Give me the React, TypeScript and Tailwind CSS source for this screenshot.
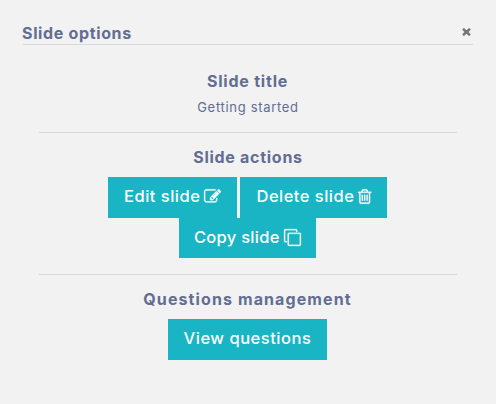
import type { ReactNode } from "react";

const TRASH =
  "M704 736v576q0 14-9 23t-23 9h-64q-14 0-23-9t-9-23v-576q0-14 9-23t23-9h64q14 0 23 9t9 23zm256 0v576q0 14-9 23t-23 9h-64q-14 0-23-9t-9-23v-576q0-14 9-23t23-9h64q14 0 23 9t9 23zm256 0v576q0 14-9 23t-23 9h-64q-14 0-23-9t-9-23v-576q0-14 9-23t23-9h64q14 0 23 9t9 23zm128 724v-948h-896v948q0 22 7 40.5t14.5 27 10.5 8.5h832q3 0 10.5-8.5t14.5-27 7-40.5zm-672-1076h448l-48-117q-7-9-17-11h-317q-10 2-17 11zm928 32v64q0 14-9 23t-23 9h-96v948q0 83-47 143.5t-113 60.5h-832q-66 0-113-58.5t-47-141.5v-952h-96q-14 0-23-9t-9-23v-64q0-14 9-23t23-9h309l70-167q15-37 54-63t79-26h320q40 0 79 26t54 63l70 167h309q14 0 23 9t9 23z";
const EDIT =
  "M888 1184l116-116-152-152-116 116v56h96v96h56zm440-720q-16-16-33 1l-350 350q-17 17-1 33t33-1l350-350q17-17 1-33zm80 594v190q0 119-84.5 203.5t-203.5 84.5h-832q-119 0-203.5-84.5t-84.5-203.5v-832q0-119 84.5-203.5t203.5-84.5h832q63 0 117 25 15 7 18 23 3 17-9 29l-49 49q-14 14-32 8-23-6-45-6h-832q-66 0-113 47t-47 113v832q0 66 47 113t113 47h832q66 0 113-47t47-113v-126q0-13 9-22l64-64q15-15 35-7t20 29zm-96-738l288 288-672 672h-288v-288zm444 132l-92 92-288-288 92-92q28-28 68-28t68 28l152 152q28 28 28 68t-28 68z";
const COPY =
  "M1664 1632v-1088q0-13-9.5-22.5t-22.5-9.5h-1088q-13 0-22.5 9.5t-9.5 22.5v1088q0 13 9.5 22.5t22.5 9.5h1088q13 0 22.5-9.5t9.5-22.5zm128-1088v1088q0 66-47 113t-113 47h-1088q-66 0-113-47t-47-113v-1088q0-66 47-113t113-47h1088q66 0 113 47t47 113zm-384-384v160h-128v-160q0-13-9.5-22.5t-22.5-9.5h-1088q-13 0-22.5 9.5t-9.5 22.5v1088q0 13 9.5 22.5t22.5 9.5h160v128h-160q-66 0-113-47t-47-113v-1088q0-66 47-113t113-47h1088q66 0 113 47t47 113z";

function Icon({ d, viewBox, className }: { d: string; viewBox: string; className: string }) {
  return (
    <svg viewBox={viewBox} className={`shrink-0 overflow-visible fill-white stroke-white ${className}`} strokeWidth="24" aria-hidden="true">
      <path d={d} />
    </svg>
  );
}

function Action({ className, children }: { className: string; children: ReactNode }) {
  return (
    <button
      className={`flex items-center bg-[#1ab5c4] pb-[3px] pl-4 text-[16.5px] font-medium whitespace-nowrap text-white ${className}`}
    >
      {children}
    </button>
  );
}

export default function App() {
  return (
    <div className="h-[404px] w-[496px] bg-[#f2f2f2] pt-[22px] pr-[23px] pl-[23px] font-['Inter','Open_Sans',sans-serif] text-[#626d92]">
      <header className="flex h-[23px] items-start justify-between border-b border-[#d7d8d9]">
        <h1 className="-ml-px text-[16px] leading-[22px] font-bold tracking-[0.65px]">Slide options</h1>
        <button aria-label="Close" className="mt-[6px] mr-[2px]">
          <svg viewBox="0 0 9 8" className="h-2 w-[9px] stroke-[#747474]" strokeWidth="2.5" fill="none">
            <path d="M1 .8 8 7.2M8 .8 1 7.2" />
          </svg>
        </button>
      </header>

      <main className="mx-4 flex flex-col text-center">
        <section className="h-[88px] border-b border-[#d7d8d9] pt-[25px]">
          <h2 className="pr-px text-[16px] leading-[22px] font-bold tracking-[0.79px]">Slide title</h2>
          <p className="mt-[5px] text-[13px] leading-[20px] tracking-[0.69px]">Getting started</p>
        </section>

        <section className="flex h-[142px] flex-col items-center border-b border-[#d7d8d9] pt-[13px]">
          <h2 className="text-[16px] leading-[22px] font-bold tracking-[0.72px]">Slide actions</h2>
          <div className="mt-[9px] mr-px flex gap-[3px]">
            <Action className="h-[41px] w-[129px]">
              <span className="w-20 pt-px text-left tracking-[0.5px]">Edit slide</span>
              <Icon d={EDIT} viewBox="0 0 1792 1792" className="size-[17px]" />
            </Action>
            <Action className="h-[41px] w-[147px]">
              <span className="w-[102px] pt-px pl-[0.5px] text-left tracking-[0.48px]">Delete slide</span>
              <Icon d={TRASH} viewBox="192 0 1408 1792" className="h-[17px] w-[13.4px]" />
            </Action>
          </div>
          <Action className="mr-[2px] h-10 w-[137px]">
            <span className="-ml-px w-[90px] pt-px pl-[0.5px] text-left tracking-[0.27px]">Copy slide</span>
            <Icon d={COPY} viewBox="0 0 1792 1792" className="mt-px size-[17px]" />
          </Action>
        </section>

        <section className="flex flex-col items-center pt-[13px]">
          <h2 className="pr-px text-[16px] leading-[22px] font-bold tracking-[1.1px]">Questions management</h2>
          <Action className="mt-[9px] mr-[2px] h-[41px] w-[159px]">
            <span className="pt-px tracking-[0.52px]">View questions</span>
          </Action>
        </section>
      </main>
    </div>
  );
}
